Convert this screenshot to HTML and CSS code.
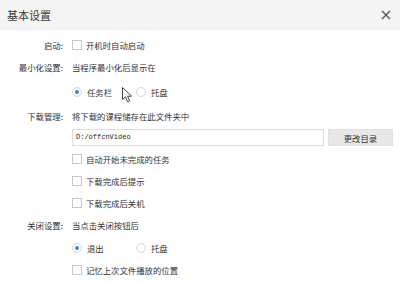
FILE: index.html
```html
<!DOCTYPE html>
<html lang="zh-CN">
<head>
  <meta charset="UTF-8" />
  <meta name="viewport" content="width=device-width, initial-scale=1.0"/>
  <title>基本设置</title>
  <link rel="stylesheet" href="styles.css">
</head>
<body>

  <div class="dialog">
    <div class="titlebar">
      <span class="title">基本设置</span>
      <svg class="close" width="10" height="10" viewBox="0 0 10 10">
        <path d="M1 1L9 9M9 1L1 9" stroke="#555" stroke-width="1.4" fill="none"/>
      </svg>
    </div>

    <div class="content">
      <div class="row">
        <div class="label">启动:</div>
        <label class="check"><span class="box"></span>开机时自动启动</label>
      </div>

      <div class="row">
        <div class="label">最小化设置:</div>
        <div class="text">当程序最小化后显示在</div>
      </div>

      <div class="row radios first-radios">
        <div class="label"></div>
        <div class="options">
          <label class="radio"><span class="dot on"></span>任务栏</label>
          <label class="radio"><span class="dot"></span>托盘</label>
        </div>
      </div>

      <div class="row">
        <div class="label">下载管理:</div>
        <div class="text">将下载的课程储存在此文件夹中</div>
      </div>

      <div class="row path-row">
        <div class="label"></div>
        <div class="path">
          <div class="path-input">D:/offcnVideo</div>
          <button class="path-btn">更改目录</button>
        </div>
      </div>

      <div class="row">
        <div class="label"></div>
        <label class="check"><span class="box"></span>自动开始未完成的任务</label>
      </div>

      <div class="row">
        <div class="label"></div>
        <label class="check"><span class="box"></span>下载完成后提示</label>
      </div>

      <div class="row">
        <div class="label"></div>
        <label class="check"><span class="box"></span>下载完成后关机</label>
      </div>

      <div class="row">
        <div class="label">关闭设置:</div>
        <div class="text">当点击关闭按钮后</div>
      </div>

      <div class="row radios second-radios">
        <div class="label"></div>
        <div class="options">
          <label class="radio"><span class="dot on"></span>退出</label>
          <label class="radio"><span class="dot"></span>托盘</label>
        </div>
      </div>

      <div class="row">
        <div class="label"></div>
        <label class="check"><span class="box"></span>记忆上次文件播放的位置</label>
      </div>
    </div>

    <!-- mouse pointer captured in the screenshot -->
    <svg class="cursor" width="11" height="16" viewBox="0 0 11 16">
      <path d="M0.5 0.5L0.5 12.5L3.5 9.8L5.6 14.8L7.6 13.9L5.6 9.2L9.6 9.2Z" fill="#fff" stroke="#444" stroke-width="1"/>
    </svg>
  </div>

</body>
</html>
```

FILE: styles.css
```css
body {
  margin: 0;
  background: #fff;
  font-family: "Noto Sans CJK SC", "Noto Sans", sans-serif;
  color: #333;
}

.dialog {
  position: relative;
  width: 400px;
  height: 286px;
  overflow: hidden;
}

.titlebar {
  height: 30px;
  background: #f4f4f4;
  border-bottom: 1px solid #efefef;
  box-sizing: border-box;
  display: flex;
  align-items: center;
  justify-content: space-between;
  padding: 0 9px 0 7px;
}

.title {
  font-size: 11px;
  color: #3a3a3a;
}

.close {
  display: block;
}

.content {
  padding-top: 4px;
  padding-right: 7px;
}

.row {
  display: grid;
  grid-template-columns: 64px 1fr;
  column-gap: 8px;
  align-items: center;
  height: 22px;
  font-size: 8.4px;
}

.label {
  text-align: right;
  padding-right: 1px;
}

.first-radios {
  height: 27px;
}

.second-radios {
  height: 23px;
}

.path-row {
  height: 21px;
}

.check,
.radio {
  display: flex;
  align-items: center;
}

.box {
  width: 8px;
  height: 8px;
  border: 1px solid #c9c9c9;
  background: #fff;
  margin-right: 4px;
}

.options {
  display: flex;
}

.radio {
  width: 64px;
}

.dot {
  width: 8px;
  height: 8px;
  border: 1px solid #d6d6d6;
  border-radius: 50%;
  background: #fff;
  margin-right: 5px;
  display: flex;
  align-items: center;
  justify-content: center;
}

.dot.on::after {
  content: "";
  width: 4px;
  height: 4px;
  border-radius: 50%;
  background: #2f86e0;
}

.path {
  display: flex;
  gap: 4px;
  height: 17px;
}

.path-input {
  flex: 1;
  border: 1px solid #dcdcdc;
  box-sizing: border-box;
  padding-left: 3px;
  font-family: "Liberation Mono", monospace;
  font-size: 7px;
  line-height: 15px;
  color: #222;
}

.path-btn {
  width: 65px;
  height: 17px;
  border: 1px solid #e0e0e0;
  background: #e8e8e8;
  font-family: "Noto Sans CJK SC", sans-serif;
  font-size: 8.4px;
  color: #333;
  padding: 0;
}

.cursor {
  position: absolute;
  left: 122px;
  top: 87px;
}
```
